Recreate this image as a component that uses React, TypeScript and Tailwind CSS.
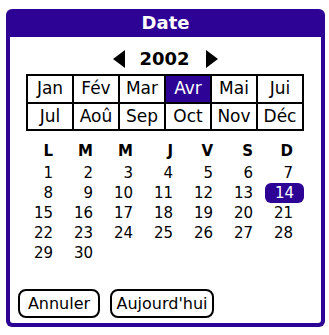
const PURPLE = "#2d0396";

const months = [
  ["Jan", "Fév", "Mar", "Avr", "Mai", "Jui"],
  ["Jul", "Aoû", "Sep", "Oct", "Nov", "Déc"],
];

const dayNames = ["L", "M", "M", "J", "V", "S", "D"];

// avril 2002 commence un lundi
const weeks: (number | null)[][] = [
  [1, 2, 3, 4, 5, 6, 7],
  [8, 9, 10, 11, 12, 13, 14],
  [15, 16, 17, 18, 19, 20, 21],
  [22, 23, 24, 25, 26, 27, 28],
  [29, 30, null, null, null, null, null],
];

export default function App() {
  return (
    <div
      className="w-[329px] h-[335px] bg-white pl-[6px] pt-[9px]"
      style={{ fontFamily: '"DejaVu Sans", Verdana, sans-serif' }}
    >
      <div className="w-[319px] h-[318px] bg-[#2d0396] rounded-[6px] px-[4px] pb-[4px] flex flex-col">
        {/* barre de titre */}
        <div className="h-[28px] flex items-center justify-center text-white font-bold text-[18px] leading-none">
          Date
        </div>

        {/* corps */}
        <div className="flex-1 bg-white rounded-b-[3px] flex flex-col">
          {/* année */}
          <div className="mt-[10px] h-[24px] flex items-center justify-center">
            <svg width="12" height="18" viewBox="0 0 12 18" className="mr-[14px]">
              <polygon points="12,0 12,18 0,9" fill="black" />
            </svg>
            <span className="font-bold text-[18px] leading-none text-black">2002</span>
            <svg width="12" height="18" viewBox="0 0 12 18" className="ml-[16px]">
              <polygon points="0,0 0,18 12,9" fill="black" />
            </svg>
          </div>

          {/* mois */}
          <div className="mt-[3px] ml-[16px] w-[278px] border-2 border-black bg-black grid grid-cols-6 gap-[2px]">
            {months.flat().map((m) => (
              <div
                key={m}
                className={
                  m === "Avr"
                    ? "h-[25.5px] flex items-center justify-center text-[17px] leading-none bg-[#2d0396] text-white"
                    : "h-[25.5px] flex items-center justify-center text-[17px] leading-none bg-white text-black"
                }
              >
                {m}
              </div>
            ))}
          </div>

          {/* jours */}
          <div className="mt-[10px] ml-[3px] w-[280px] grid grid-cols-7 text-black">
            {dayNames.map((d, i) => (
              <div key={i} className="h-[22px] text-right font-bold text-[15px] leading-[20px]">
                {d}
              </div>
            ))}
            {weeks.flat().map((n, i) =>
              n === 14 ? (
                <div key={i} className="h-[20px] flex justify-end">
                  <span className="h-[20px] w-[39px] -mr-[11px] pr-[10px] rounded-[6px] bg-[#2d0396] text-white text-right text-[15px] leading-[20px]">
                    {n}
                  </span>
                </div>
              ) : (
                <div key={i} className="h-[20px] text-right text-[15px] leading-[20px]">
                  {n ?? ""}
                </div>
              ),
            )}
          </div>

          {/* boutons */}
          <div className="mt-[26px] ml-[8px] flex gap-[10px]">
            <button className="h-[29px] w-[82px] border-2 border-black rounded-[8px] text-[16px] leading-none text-black">
              Annuler
            </button>
            <button className="h-[29px] w-[104px] border-2 border-black rounded-[8px] text-[16px] leading-none text-black">
              Aujourd'hui
            </button>
          </div>
        </div>
      </div>
    </div>
  );
}
